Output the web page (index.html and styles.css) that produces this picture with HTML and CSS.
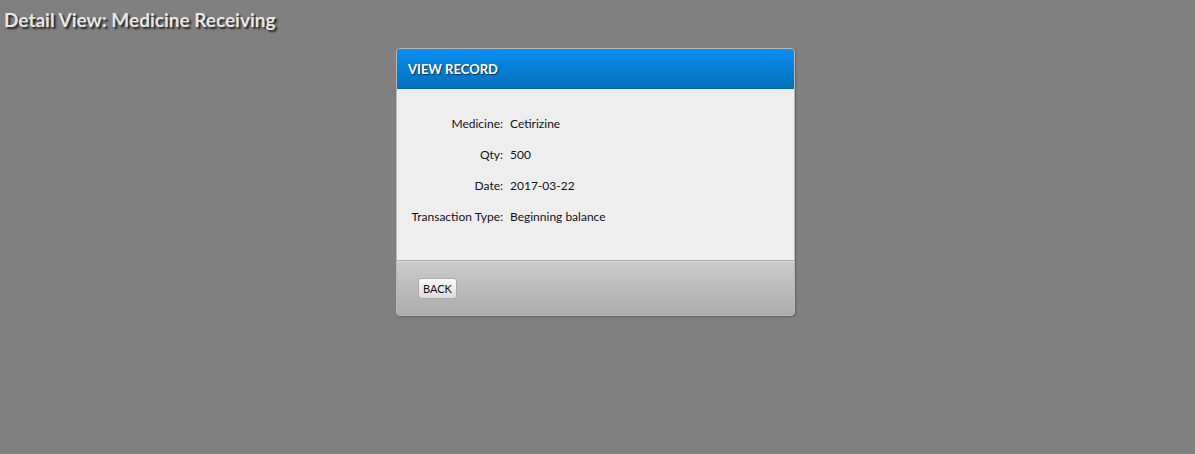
FILE: index.html
```html
<!DOCTYPE html>
<html>
<head>
<meta charset="utf-8">
<link rel="stylesheet" href="styles.css">
</head>
<body>
<h1 class="page-title">Detail View: Medicine Receiving</h1>
<div class="panel">
  <div class="panel-head">VIEW RECORD</div>
  <div class="panel-body">
    <div class="row"><div class="label">Medicine:</div><div class="value">Cetirizine</div></div>
    <div class="row"><div class="label">Qty:</div><div class="value">500</div></div>
    <div class="row"><div class="label">Date:</div><div class="value">2017-03-22</div></div>
    <div class="row"><div class="label">Transaction Type:</div><div class="value">Beginning balance</div></div>
  </div>
  <div class="panel-foot"><button class="btn">BACK</button></div>
</div>
</body>
</html>
```
FILE: styles.css
```css
html, body { margin: 0; padding: 0; }
body {
  background: #808080;
  font-family: Lato, "Open Sans", sans-serif;
  width: 1195px;
  height: 454px;
  overflow: hidden;
}
.page-title {
  margin: 0;
  padding: 6px 0 0 4px;
  height: 42px;
  box-sizing: border-box;
  font-size: 19px;
  font-weight: bold;
  color: #e6e6e6;
  text-shadow: 2px 2px 2px #222;
  line-height: 28px;
}
.panel {
  width: 397px;
  margin: 6px 0 0 396px;
  border: 1px solid #b9b9b9;
  border-radius: 4px;
  overflow: hidden;
  box-shadow: 1px 1px 2px rgba(0,0,0,0.25);
}
.panel-head {
  height: 40px;
  box-sizing: border-box;
  padding: 12px 11px 0;
  background: linear-gradient(#0c8ef2, #0071b9);
  color: #fff;
  font-size: 13px;
  font-weight: bold;
  text-shadow: 1px 1px 1px #1a3050;
  border-bottom: 1px solid #0068a8;
}
.panel-body {
  background: #eeeeee;
  height: 172px;
  box-sizing: border-box;
  padding: 27px 0 0 0;
  border-bottom: 1px solid #a9a9a9;
}
.row {
  display: flex;
  gap: 7px;
  height: 31px;
  font-size: 12px;
  color: #11111a;
}
.label { width: 106px; text-align: right; }
.panel-foot {
  height: 54px;
  box-sizing: border-box;
  padding: 15px 0 0 21px;
  background: linear-gradient(#cbcbcb, #acacac);
  border-top: 1px solid #d8d8d8;
}
.btn {
  font-family: inherit;
  font-size: 11px;
  color: #111;
  height: 21px;
  padding: 0 4px;
  border: 1px solid #aaa;
  border-radius: 3px;
  background: linear-gradient(#fafafa, #dcdcdc);
}
```
